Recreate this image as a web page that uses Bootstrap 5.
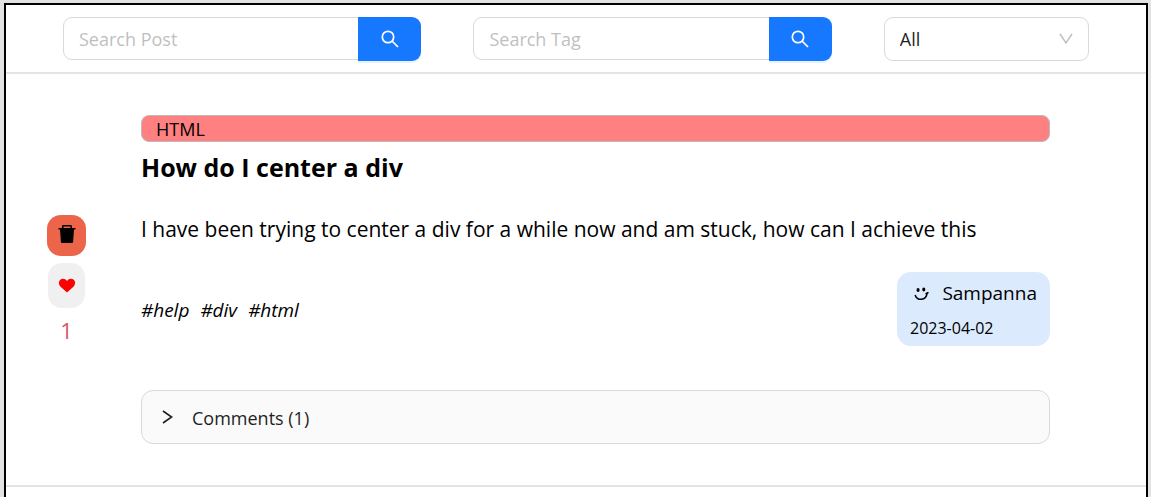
<!DOCTYPE html>
<html lang="en">
<head>
<meta charset="utf-8">
<meta name="viewport" content="width=device-width, initial-scale=1">
<title>Posts</title>
<link href="https://cdn.jsdelivr.net/npm/bootstrap@5.3.0/dist/css/bootstrap.min.css" rel="stylesheet">
<style>
  body { background: #e3e3e5; color: #000; font-family: "Segoe UI", "Open Sans", "Noto Sans", sans-serif; }
  .frame { margin: 3px 3px 0 4px; border: 2px solid #000; border-bottom: 0; min-height: calc(100vh - 3px); background: #fff; }
  .topbar { padding: 12px 5% 11px; border-bottom: 2px solid #e4e4e4; }
  .search { width: calc(35% - 1px); }
  .search .form-control { height: 43px; padding: 0 15px; border-color: #d9d9d9; border-radius: 9px; font-size: 18px; }
  .search .form-control::placeholder { color: #bfbfbf; }
  .search-btn { width: 63px; height: 44px; padding: 0; background: #1677ff; color: #fff; border: 0; border-radius: 0 9px 9px 0; box-shadow: 0 2px 0 rgba(5, 145, 255, .1); }
  .category { width: 20%; }
  .category .form-select { height: 44px; padding: 0 40px 0 15px; border-color: #d9d9d9; border-radius: 9px; font-size: 18px; color: #1f1f1f;
    background-position: right 14px center; background-size: 16px 16px;
    background-image: url("data:image/svg+xml,%3Csvg xmlns='http://www.w3.org/2000/svg' viewBox='0 0 16 16'%3E%3Cpath d='M2 3 8 12l6-9' fill='none' stroke='%23bfbfbf' stroke-width='1.5'/%3E%3C/svg%3E"); }
  .post { padding: 41px 96px 41px 41px; gap: 55px; border-bottom: 2px solid #e4e4e4; }
  .votes { width: 39px; }
  .vote-btn { border: 0; padding: 0; border-radius: 14px; }
  .vote-delete { width: 39px; height: 41px; background: #ec654b; color: #000; }
  .vote-like { width: 37px; height: 45px; background: #f0f0f0; color: #f00; margin-top: 7px; }
  .vote-count { color: #dc5567; font-size: 22px; line-height: 30px; margin-top: 7px; }
  .topic { height: 27px; padding: 2px 14px 0; font-size: 18px; background: #ff8080; border: 1px solid #bbb; border-radius: 8px; }
  .post-title { font-size: 25px; line-height: 32px; font-weight: 700; margin: 9px 0 0; }
  .post-text { font-size: 21px; line-height: 32px; margin: 30px 0 0; }
  .post-meta { margin-top: 27px; }
  .tags { font-size: 19px; line-height: 28px; padding-top: 2px; gap: 11px; font-style: italic; }
  .author { width: 153px; height: 74px; padding: 6px 13px; background: #dbebfd; border-radius: 14px; }
  .author-name { font-size: 19px; line-height: 30px; gap: 11px; }
  .author-date { font-size: 16px; line-height: 24px; margin-top: 8px; }
  .comments { height: 54px; margin-top: 44px; padding: 2px 17px 0; gap: 17px; font-size: 18px; color: #1f1f1f; background: #fafafa; border: 1px solid #d9d9d9; border-radius: 12px; }
</style>
</head>
<body>
<div class="frame">
  <header class="topbar d-flex justify-content-between align-items-start">
    <form class="search input-group flex-nowrap align-items-start" role="search">
      <input class="form-control" type="text" placeholder="Search Post" aria-label="Search Post">
      <button class="btn search-btn d-flex align-items-center justify-content-center" type="button" aria-label="Search posts">
        <svg width="18" height="18" viewBox="0 0 18 18" fill="none" stroke="currentColor" stroke-width="1.7"><circle cx="7" cy="7" r="5.700"/><path d="m11 11 6 6"/></svg>
      </button>
    </form>
    <form class="search input-group flex-nowrap align-items-start" role="search">
      <input class="form-control" type="text" placeholder="Search Tag" aria-label="Search Tag">
      <button class="btn search-btn d-flex align-items-center justify-content-center" type="button" aria-label="Search tags">
        <svg width="18" height="18" viewBox="0 0 18 18" fill="none" stroke="currentColor" stroke-width="1.7"><circle cx="7" cy="7" r="5.700"/><path d="m11 11 6 6"/></svg>
      </button>
    </form>
    <div class="category">
      <select class="form-select" aria-label="Category"><option>All</option><option>HTML</option></select>
    </div>
  </header>

  <main>
    <article class="post d-flex align-items-center">
      <div class="votes d-flex flex-column align-items-center flex-shrink-0">
        <button class="vote-btn vote-delete d-flex align-items-center justify-content-center" type="button" aria-label="Delete post">
          <svg width="18" height="20" viewBox="0 0 18 20" fill="currentColor"><path d="M4 3V1.400Q4 0 5.400 0h7.200Q14 0 14 1.400V3h3.500v1.500H16l-.9 12.500q-.1 1-1.200 1H4.100q-1.100 0-1.200-1L2 4.500H.5V3zm1.500 0h7V1.500h-7z"/></svg>
        </button>
        <button class="vote-btn vote-like d-flex align-items-center justify-content-center" type="button" aria-label="Like post">
          <svg width="18" height="16" viewBox="0 0 18 16" fill="currentColor"><path d="M9 15.600 2.300 9.400C.5 7.600.4 4.600 2 3 4.200 1.100 7.300 1.600 9 4c1.700-2.400 4.800-2.900 7-1 1.600 1.600 1.500 4.600-.3 6.400z"/></svg>
        </button>
        <span class="vote-count">1</span>
      </div>
      <div class="flex-grow-1">
        <div class="topic d-flex align-items-center">HTML</div>
        <h1 class="post-title">How do I center a div</h1>
        <p class="post-text">I have been trying to center a div for a while now and am stuck, how can I achieve this</p>
        <div class="post-meta d-flex justify-content-between align-items-center">
          <div class="tags d-flex"><span>#help</span><span>#div</span><span>#html</span></div>
          <div class="author">
            <div class="author-name d-flex align-items-center">
              <svg width="22" height="20" viewBox="0 0 22 20" fill="none" stroke="currentColor" stroke-width="1.6" stroke-linecap="round"><path d="M5.500 12.500c1.800 5 11 6.500 12.200-2.600M16.500 10.700l2-1"/><ellipse cx="8.300" cy="6.900" rx=".8" ry="1.200"/><ellipse cx="14.200" cy="6.400" rx=".8" ry="1.200"/></svg>
              <span>Sampanna</span>
            </div>
            <div class="author-date">2023-04-02</div>
          </div>
        </div>
        <button class="comments d-flex align-items-center w-100" type="button" aria-expanded="false">
          <svg width="16" height="16" viewBox="0 0 16 16" fill="none" stroke="currentColor" stroke-width="1.600"><path d="m4 1 8.600 6L4 13"/></svg>
          <span>Comments (1)</span>
        </button>
      </div>
    </article>
  </main>
</div>
<script src="https://cdn.jsdelivr.net/npm/bootstrap@5.3.0/dist/js/bootstrap.bundle.min.js"></script>
</body>
</html>
